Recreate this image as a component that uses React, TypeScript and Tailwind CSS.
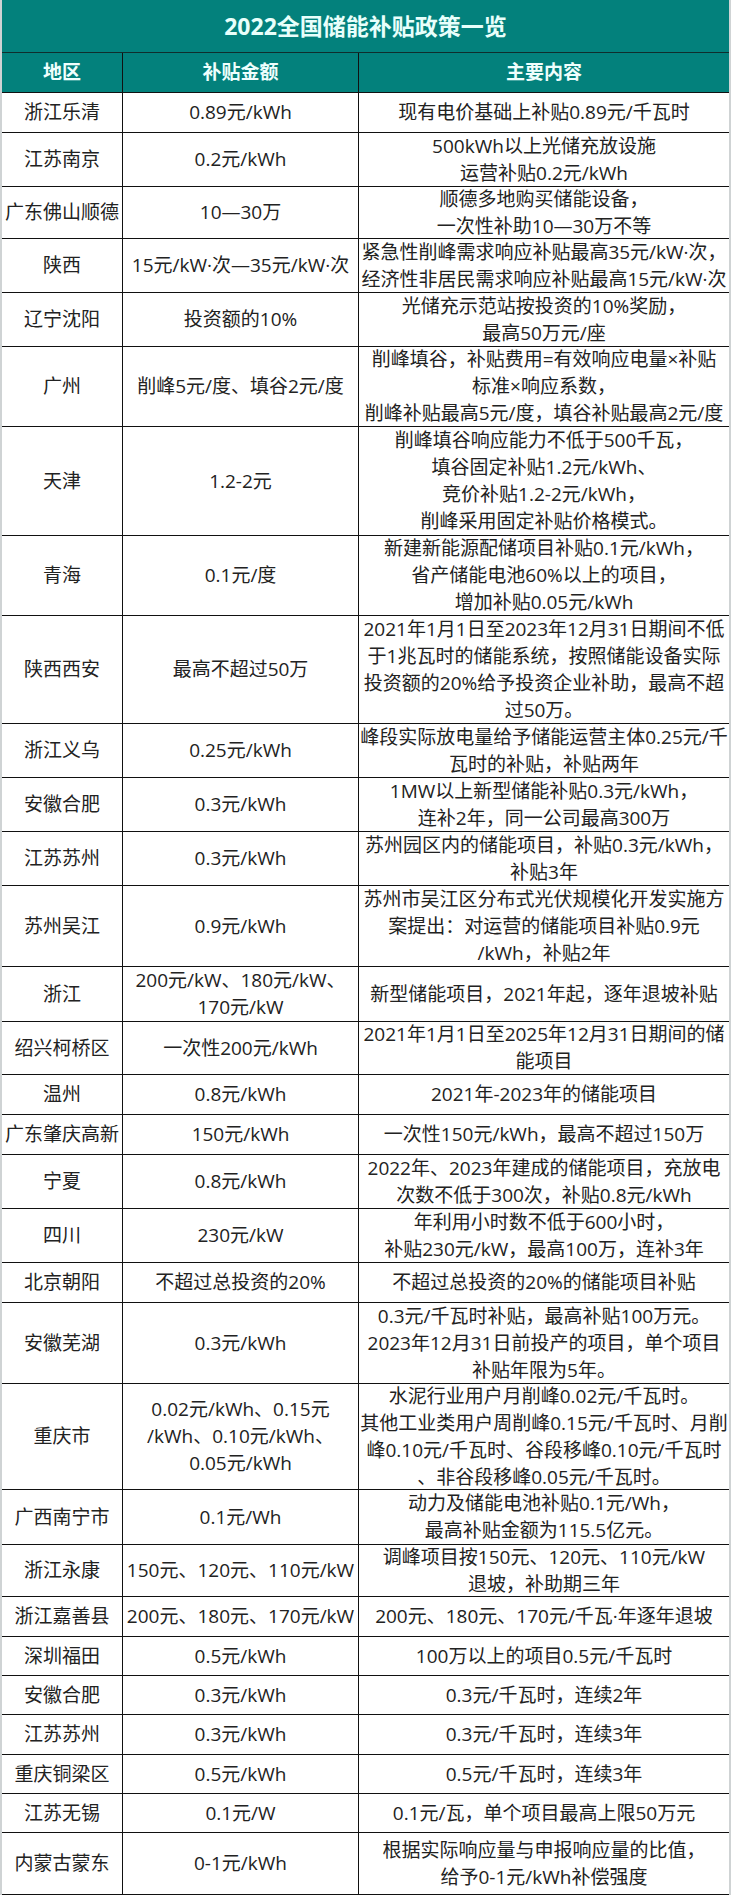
import React from "react";

type Row = { r: string[]; a: string[]; c: string[]; h: string };

const rows: Row[] = [
  { r: ["浙江乐清"], a: ["0.89元/kWh"], c: ["现有电价基础上补贴0.89元/千瓦时"], h: "h-[40px]" },
  { r: ["江苏南京"], a: ["0.2元/kWh"], c: ["500kWh以上光储充放设施", "运营补贴0.2元/kWh"], h: "h-[54px]" },
  { r: ["广东佛山顺德"], a: ["10—30万"], c: ["顺德多地购买储能设备，", "一次性补助10—30万不等"], h: "h-[52px]" },
  { r: ["陕西"], a: ["15元/kW·次—35元/kW·次"], c: ["紧急性削峰需求响应补贴最高35元/kW·次，", "经济性非居民需求响应补贴最高15元/kW·次"], h: "h-[54px]" },
  { r: ["辽宁沈阳"], a: ["投资额的10%"], c: ["光储充示范站按投资的10%奖励，", "最高50万元/座"], h: "h-[54px]" },
  { r: ["广州"], a: ["削峰5元/度、填谷2元/度"], c: ["削峰填谷，补贴费用=有效响应电量×补贴", "标准×响应系数，", "削峰补贴最高5元/度，填谷补贴最高2元/度"], h: "h-[80px]" },
  { r: ["天津"], a: ["1.2-2元"], c: ["削峰填谷响应能力不低于500千瓦，", "填谷固定补贴1.2元/kWh、", "竞价补贴1.2-2元/kWh，", "削峰采用固定补贴价格模式。"], h: "h-[109px]" },
  { r: ["青海"], a: ["0.1元/度"], c: ["新建新能源配储项目补贴0.1元/kWh，", "省产储能电池60%以上的项目，", "增加补贴0.05元/kWh"], h: "h-[80px]" },
  { r: ["陕西西安"], a: ["最高不超过50万"], c: ["2021年1月1日至2023年12月31日期间不低", "于1兆瓦时的储能系统，按照储能设备实际", "投资额的20%给予投资企业补助，最高不超", "过50万。"], h: "h-[108px]" },
  { r: ["浙江义乌"], a: ["0.25元/kWh"], c: ["峰段实际放电量给予储能运营主体0.25元/千", "瓦时的补贴，补贴两年"], h: "h-[54px]" },
  { r: ["安徽合肥"], a: ["0.3元/kWh"], c: ["1MW以上新型储能补贴0.3元/kWh，", "连补2年，同一公司最高300万"], h: "h-[54px]" },
  { r: ["江苏苏州"], a: ["0.3元/kWh"], c: ["苏州园区内的储能项目，补贴0.3元/kWh，", "补贴3年"], h: "h-[54px]" },
  { r: ["苏州吴江"], a: ["0.9元/kWh"], c: ["苏州市吴江区分布式光伏规模化开发实施方", "案提出：对运营的储能项目补贴0.9元", "/kWh，补贴2年"], h: "h-[81px]" },
  { r: ["浙江"], a: ["200元/kW、180元/kW、", "170元/kW"], c: ["新型储能项目，2021年起，逐年退坡补贴"], h: "h-[55px]" },
  { r: ["绍兴柯桥区"], a: ["一次性200元/kWh"], c: ["2021年1月1日至2025年12月31日期间的储", "能项目"], h: "h-[53px]" },
  { r: ["温州"], a: ["0.8元/kWh"], c: ["2021年-2023年的储能项目"], h: "h-[40px]" },
  { r: ["广东肇庆高新"], a: ["150元/kWh"], c: ["一次性150元/kWh，最高不超过150万"], h: "h-[40px]" },
  { r: ["宁夏"], a: ["0.8元/kWh"], c: ["2022年、2023年建成的储能项目，充放电", "次数不低于300次，补贴0.8元/kWh"], h: "h-[54px]" },
  { r: ["四川"], a: ["230元/kW"], c: ["年利用小时数不低于600小时，", "补贴230元/kW，最高100万，连补3年"], h: "h-[54px]" },
  { r: ["北京朝阳"], a: ["不超过总投资的20%"], c: ["不超过总投资的20%的储能项目补贴"], h: "h-[40px]" },
  { r: ["安徽芜湖"], a: ["0.3元/kWh"], c: ["0.3元/千瓦时补贴，最高补贴100万元。", "2023年12月31日前投产的项目，单个项目", "补贴年限为5年。"], h: "h-[81px]" },
  { r: ["重庆市"], a: ["0.02元/kWh、0.15元", "/kWh、0.10元/kWh、", "0.05元/kWh"], c: ["水泥行业用户月削峰0.02元/千瓦时。", "其他工业类用户周削峰0.15元/千瓦时、月削", "峰0.10元/千瓦时、谷段移峰0.10元/千瓦时", "、非谷段移峰0.05元/千瓦时。"], h: "h-[106px]" },
  { r: ["广西南宁市"], a: ["0.1元/Wh"], c: ["动力及储能电池补贴0.1元/Wh，", "最高补贴金额为115.5亿元。"], h: "h-[55px]" },
  { r: ["浙江永康"], a: ["150元、120元、110元/kW"], c: ["调峰项目按150元、120元、110元/kW", "退坡，补助期三年"], h: "h-[52px]" },
  { r: ["浙江嘉善县"], a: ["200元、180元、170元/kW"], c: ["200元、180元、170元/千瓦·年逐年退坡"], h: "h-[40px]" },
  { r: ["深圳福田"], a: ["0.5元/kWh"], c: ["100万以上的项目0.5元/千瓦时"], h: "h-[39px]" },
  { r: ["安徽合肥"], a: ["0.3元/kWh"], c: ["0.3元/千瓦时，连续2年"], h: "h-[39px]" },
  { r: ["江苏苏州"], a: ["0.3元/kWh"], c: ["0.3元/千瓦时，连续3年"], h: "h-[40px]" },
  { r: ["重庆铜梁区"], a: ["0.5元/kWh"], c: ["0.5元/千瓦时，连续3年"], h: "h-[39px]" },
  { r: ["江苏无锡"], a: ["0.1元/W"], c: ["0.1元/瓦，单个项目最高上限50万元"], h: "h-[39px]" },
  { r: ["内蒙古蒙东"], a: ["0-1元/kWh"], c: ["根据实际响应量与申报响应量的比值，", "给予0-1元/kWh补偿强度"], h: "h-[62px]" },
];

function Cell({ lines, last }: { lines: string[]; last?: boolean }) {
  return (
    <div
      className={
        "flex flex-col items-center justify-center text-center overflow-hidden " +
        (last ? "" : "border-r border-[#111]")
      }
    >
      {lines.map((l, i) => (
        <div key={i} className="whitespace-nowrap leading-[27px]">
          {l}
        </div>
      ))}
    </div>
  );
}

export default function App() {
  return (
    <div className="w-[731px] bg-white font-['Open_Sans','Noto_Sans_CJK_SC',sans-serif] text-[19px] text-[#222]">
      <div className="border-x-2 border-[#cfd3d4]">
        <div className="h-[53px] bg-[#03817c] border-b border-[#0f2e2d] flex items-center justify-center">
          <span className="text-[23px] font-bold text-[#e8fffb] tracking-[0px]">2022全国储能补贴政策一览</span>
        </div>
        <div className="h-[40px] bg-[#03817c] border-b border-[#111] grid grid-cols-[121px_236px_1fr] font-bold text-[#effffd]">
          <div className="flex items-center justify-center border-r border-[#111]">地区</div>
          <div className="flex items-center justify-center border-r border-[#111]">补贴金额</div>
          <div className="flex items-center justify-center">主要内容</div>
        </div>
        {rows.map((row, i) => (
          <div key={i} className={"grid grid-cols-[121px_236px_1fr] border-b border-[#111] " + row.h}>
            <Cell lines={row.r} />
            <Cell lines={row.a} />
            <Cell lines={row.c} last />
          </div>
        ))}
      </div>
      <div className="h-[2px]" />
    </div>
  );
}
